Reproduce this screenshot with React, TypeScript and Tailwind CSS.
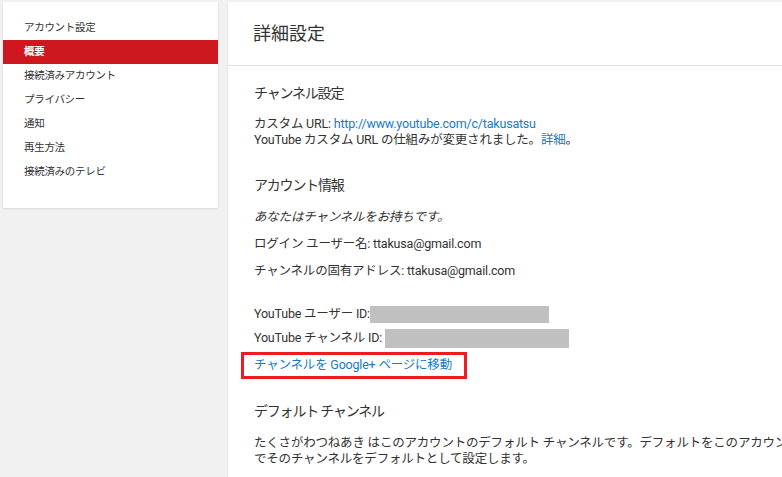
const menu = [
  'アカウント設定',
  '概要',
  '接続済みアカウント',
  'プライバシー',
  '通知',
  '再生方法',
  '接続済みのテレビ',
];

const font = { fontFamily: 'Roboto, "Noto Sans CJK JP", sans-serif' };

function Sidebar() {
  return (
    <div className="w-[215px] shrink-0 bg-white pt-[14px] pb-[24px] shadow-[0_1px_2px_rgba(0,0,0,0.1)]">
      {menu.map((item) => (
        <div
          key={item}
          className={
            item === '概要'
              ? 'h-6 flex items-center pl-[21px] text-[10.5px] tracking-[-0.3px] bg-[#cc181e] text-white font-bold'
              : 'h-6 flex items-center pl-[21px] text-[10.5px] tracking-[-0.3px] text-[#333]'
          }
        >
          {item}
        </div>
      ))}
    </div>
  );
}

export default function App() {
  return (
    <div
      className="w-[782px] h-[477px] overflow-hidden bg-[#f1f1f1] flex items-start pt-[2px] pl-[3px]"
      style={font}
    >
      <Sidebar />
      <div className="ml-[10px] w-[560px] shrink-0 bg-white min-h-[480px] shadow-[0_1px_2px_rgba(0,0,0,0.1)]">
        {/* header */}
        <div className="h-[64px] flex items-center pl-[25px] border-b border-[#e2e2e2]">
          <h1 className="text-[18px] text-[#333] font-normal">詳細設定</h1>
        </div>

        <div className="pl-[26px] pt-[17px] text-[12.5px] tracking-[-0.2px] text-[#333]">
          <h2 className="text-[14px] tracking-[-1.2px] leading-5 font-normal">チャンネル設定</h2>
          <div className="mt-[13px] leading-4">
            <div>
              カスタム URL:{' '}
              <span className="text-[#167ac6]">http://www.youtube.com/c/takusatsu</span>
            </div>
            <div>
              YouTube カスタム URL の仕組みが変更されました。
              <span className="text-[#167ac6]">詳細</span>。
            </div>
          </div>

          <h2 className="mt-[27px] text-[14px] tracking-[-1.2px] leading-5 font-normal">アカウント情報</h2>
          <div className="mt-[9px]">
            <div className="h-[27px] flex items-center italic">あなたはチャンネルをお持ちです。</div>
            <div className="h-[27px] flex items-center">ログイン ユーザー名: ttakusa@gmail.com</div>
            <div className="h-[27px] flex items-center">チャンネルの固有アドレス: ttakusa@gmail.com</div>
          </div>

          <div className="mt-[20px] h-[18px] flex items-center">
            YouTube ユーザー ID:
            <span className="inline-block w-[179px] h-[17px] bg-[#c0c0c0]" />
          </div>
          <div className="mt-[6px] h-[19px] flex items-center">
            YouTube チャンネル ID:&nbsp;
            <span className="inline-block w-[184px] h-[19px] bg-[#c0c0c0]" />
          </div>

          <div className="mt-[4px] -ml-[13px] w-[226px] h-[27px] border-[3px] border-[#ed1c24] flex items-center pl-[10px] whitespace-nowrap text-[#167ac6]">
            チャンネルを Google+ ページに移動
          </div>

          <h2 className="mt-[22px] text-[14px] tracking-[-1.2px] leading-5 font-normal">デフォルト チャンネル</h2>
          <div className="mt-[14px] leading-4 whitespace-nowrap">
            <div>
              たくさがわつねあき はこのアカウントのデフォルト チャンネルです。デフォルトをこのアカウントの別のチャンネルに変更する場合は、
            </div>
            <div>でそのチャンネルをデフォルトとして設定します。</div>
          </div>
        </div>
      </div>
    </div>
  );
}
